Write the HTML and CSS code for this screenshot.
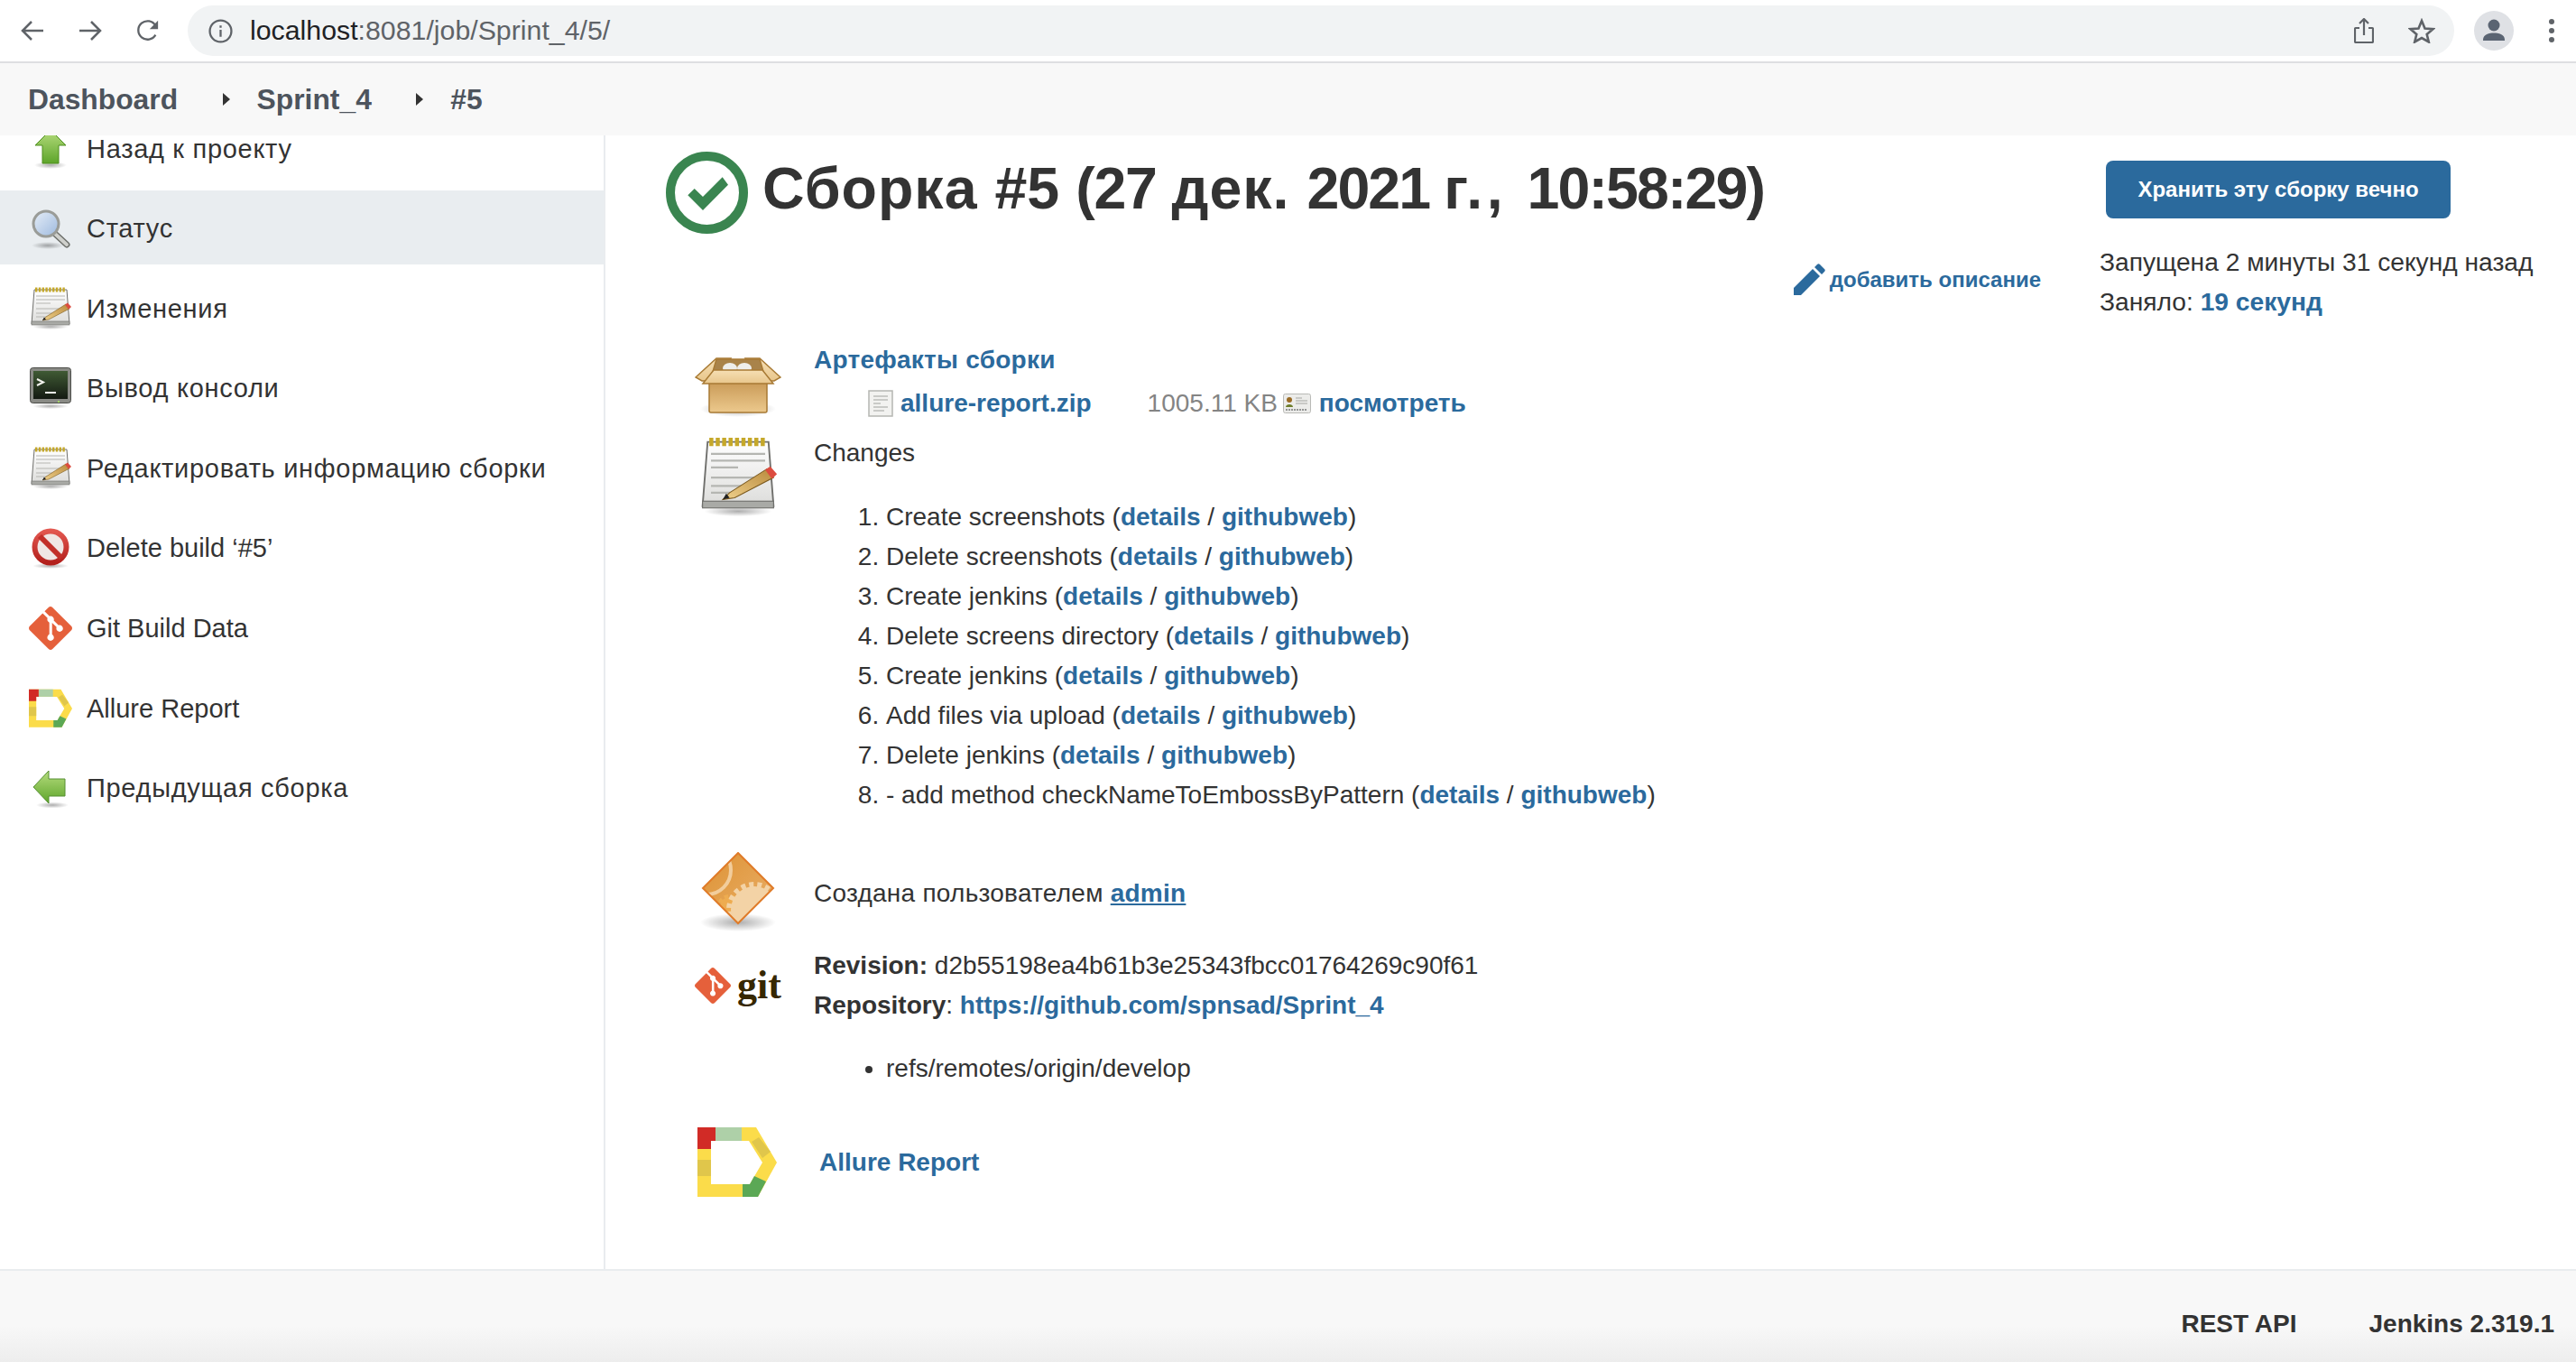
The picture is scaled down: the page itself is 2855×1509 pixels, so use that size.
FILE: index.html
```html
<!DOCTYPE html>
<html lang="en">
<head>
    <meta charset="UTF-8">
    <title>Sprint_4 #5</title>
    <link rel="stylesheet" href="styles.css">
</head>
<body>
    <!-- shared icons -->
    <svg class="sprite" xmlns="http://www.w3.org/2000/svg">
        <defs>
            <linearGradient id="g-green" x1="0" y1="0" x2="0" y2="1"><stop offset="0" stop-color="#b6dc7e"/><stop offset="1" stop-color="#5da52a"/></linearGradient>
            <linearGradient id="g-paper" x1="0" y1="0" x2="0" y2="1"><stop offset="0" stop-color="#ffffff"/><stop offset="1" stop-color="#dcdcda"/></linearGradient>
            <linearGradient id="g-glass" x1="0" y1="0" x2="1" y2="1"><stop offset="0" stop-color="#e6eef8"/><stop offset="1" stop-color="#9db9de"/></linearGradient>
            <linearGradient id="g-red" x1="0" y1="0" x2="0" y2="1"><stop offset="0" stop-color="#e2574f"/><stop offset="1" stop-color="#b3201c"/></linearGradient>
            <linearGradient id="g-box" x1="0" y1="0" x2="0" y2="1"><stop offset="0" stop-color="#c99a57"/><stop offset="1" stop-color="#ecc98d"/></linearGradient>
            <linearGradient id="g-flap" x1="0" y1="0" x2="0" y2="1"><stop offset="0" stop-color="#f6dfb4"/><stop offset="1" stop-color="#e8c68c"/></linearGradient>
            <linearGradient id="g-pencil" x1="0" y1="1" x2="1" y2="0"><stop offset="0" stop-color="#f0d28e"/><stop offset="1" stop-color="#b98a3c"/></linearGradient>
            <linearGradient id="g-term" x1="0" y1="0" x2="0" y2="1"><stop offset="0" stop-color="#3f5a34"/><stop offset="1" stop-color="#141a12"/></linearGradient>
            <linearGradient id="g-diamond" x1="0" y1="0" x2="1" y2="1"><stop offset="0" stop-color="#dd9234"/><stop offset="1" stop-color="#eab06a"/></linearGradient>
            <radialGradient id="g-shadow"><stop offset="0" stop-color="#000" stop-opacity=".32"/><stop offset="1" stop-color="#000" stop-opacity="0"/></radialGradient>
            <clipPath id="c-diamond"><path d="M41 1 80 40 41 79 2 40z"/></clipPath>
        </defs>
        <symbol id="i-up" viewBox="0 0 48 48">
            <ellipse cx="24" cy="42" rx="18" ry="4" fill="url(#g-shadow)"/>
            <path d="M24 3 41 20H33V40H15V20H7z" fill="url(#g-green)" stroke="#4e8f1f" stroke-width="1"/>
        </symbol>
        <symbol id="i-search" viewBox="0 0 48 48">
            <ellipse cx="21" cy="43" rx="18" ry="4" fill="url(#g-shadow)"/>
            <path d="M29 30 42 42" stroke="#6d6f6b" stroke-width="7" stroke-linecap="round"/>
            <path d="M29 30 42 42" stroke="#cfd0cc" stroke-width="4" stroke-linecap="round"/>
            <circle cx="19" cy="19" r="14" fill="url(#g-glass)" stroke="#9a9c98" stroke-width="3"/>
        </symbol>
        <symbol id="i-notes" viewBox="0 0 48 48">
            <ellipse cx="24" cy="44" rx="20" ry="3" fill="url(#g-shadow)"/>
            <path d="M6 3H42L45 41H3z" fill="url(#g-paper)" stroke="#6f6f6c" stroke-width="1"/>
            <rect x="3" y="38" width="42" height="4" fill="#a9aaa6" stroke="#6f6f6c" stroke-width=".6"/>
            <path d="M8 10H40M8 14H40M8 18H24M8 24H36M8 29H30M8 33H26" stroke="#b5b6b2" stroke-width="1.2"/>
            <path d="M7 3H41" stroke="#c5a82a" stroke-width="5" stroke-dasharray="2.400 1.400"/>
            <path d="M19 33 41 19 45 24 22 36 15 37z" fill="url(#g-pencil)" stroke="#7c5a1e" stroke-width=".6"/>
            <path d="M15 37 17 33.500 19 36z" fill="#222"/>
            <path d="M40 19.500 43 17.500 47 22 44 24.800z" fill="#dc4c3f"/>
        </symbol>
        <symbol id="i-term" viewBox="0 0 48 48">
            <ellipse cx="24" cy="44" rx="20" ry="3" fill="url(#g-shadow)"/>
            <rect x="1.500" y="1.500" width="45" height="39" rx="3" fill="#8a8b86" stroke="#4b4c48" stroke-width="1"/>
            <rect x="5" y="5" width="38" height="31" fill="url(#g-term)"/>
            <path d="M9 14 16 17.500 9 21" fill="none" stroke="#f3f3ee" stroke-width="2"/>
            <path d="M18 29H30" stroke="#f3f3ee" stroke-width="2"/>
            <rect x="32" y="38" width="2" height="2" fill="#a5d46a"/>
        </symbol>
        <symbol id="i-stop" viewBox="0 0 48 48">
            <ellipse cx="24" cy="44" rx="20" ry="3" fill="url(#g-shadow)"/>
            <circle cx="24" cy="23" r="17.500" fill="#f0e6e4" stroke="url(#g-red)" stroke-width="6"/>
            <path d="M12 11 36 35" stroke="#c22f29" stroke-width="6"/>
        </symbol>
        <symbol id="i-git" viewBox="0 0 24 24">
            <path fill="#e5603b" d="M23.546 10.93L13.067.452c-.604-.603-1.582-.603-2.188 0L8.708 2.627l2.76 2.76c.645-.215 1.379-.07 1.889.441.516.515.658 1.258.438 1.9l2.658 2.66c.645-.223 1.387-.078 1.9.435.721.72.721 1.884 0 2.604-.719.719-1.881.719-2.6 0-.539-.541-.674-1.337-.404-1.996L12.86 8.955v6.525c.176.086.342.203.488.348.713.721.713 1.883 0 2.6-.719.721-1.889.721-2.609 0-.719-.719-.719-1.879 0-2.598.182-.18.387-.316.605-.406V8.835c-.217-.091-.424-.222-.6-.401-.545-.545-.676-1.342-.396-2.009L7.636 3.7.45 10.881c-.6.605-.6 1.584 0 2.189l10.48 10.477c.604.604 1.582.604 2.186 0l10.43-10.43c.605-.603.605-1.582 0-2.187"/>
        </symbol>
        <symbol id="i-allure" viewBox="0 0 88 78">
            <path fill="#fbdc4a" fill-rule="evenodd" d="M0 0H65L88 39 67 77H0zM15 15V63H58L72 39 57 15z"/>
            <path fill="#d12b26" d="M0 0H20V15H15V24H0z"/>
            <path fill="#aed0a8" d="M20 0H49V15H20z"/>
            <path fill="#e0c64b" d="M0 36H15V54H0zM60 16 68 11 81 27 72 34z"/>
            <path fill="#5ba855" d="M50 63H58L63 54 76 60 67 77H50z"/>
        </symbol>
        <symbol id="i-back" viewBox="0 0 48 48">
            <ellipse cx="26" cy="43" rx="18" ry="3.500" fill="url(#g-shadow)"/>
            <path d="M5 23 22 5V14H40V33H22V41z" fill="url(#g-green)" stroke="#568f33" stroke-width="1"/>
        </symbol>
    </svg>

    <div class="browser-bar">
        <svg class="nav-icon" viewBox="0 0 26 26"><path d="M25 13H3M12 3 2 13 12 23"/></svg>
        <svg class="nav-icon" viewBox="0 0 26 26"><path d="M1 13H23M14 3 24 13 14 23"/></svg>
        <svg class="nav-icon" viewBox="0 0 28 26"><path d="M23 18A11 11 0 1 1 23 7"/><path class="solid" d="M26 1V11H16z"/></svg>
        <div class="address">
            <svg class="info-icon" viewBox="0 0 26 26"><circle cx="13" cy="13" r="11.500"/><path d="M13 11.500V19M13 7V9.500"/></svg>
            <span class="url"><span class="url-host">localhost</span>:8081/job/Sprint_4/5/</span>
            <svg class="share-icon" viewBox="0 0 22 28"><path d="M6 11H2A1 1 0 0 0 1 12V26A1 1 0 0 0 2 27H20A1 1 0 0 0 21 26V12A1 1 0 0 0 20 11H16M11 19V2M6 6 11 1 16 6"/></svg>
            <svg class="star-icon" viewBox="0 0 30 28"><path d="M15 3 18.500 11.500 27.500 12.200 20.700 18 22.800 26.500 15 22 7.200 26.500 9.300 18 2.500 12.200 11.500 11.500z"/></svg>
        </div>
        <div class="avatar"><svg viewBox="0 0 44 44"><circle cx="22" cy="16" r="6.500"/><path d="M10 32C10 26 17 24.500 22 24.500S34 26 34 32V33H10z"/></svg></div>
        <div class="dots"><i></i><i></i><i></i></div>
    </div>

    <div class="breadcrumbs">
        <a class="crumb">Dashboard</a>
        <span class="caret"></span>
        <a class="crumb">Sprint_4</a>
        <span class="caret"></span>
        <a class="crumb">#5</a>
    </div>

    <div class="page">
        <div class="sidebar">
            <div class="tasks">
                <a class="task cyr"><svg class="task-icon"><use href="#i-up"/></svg>Назад к проекту</a>
                <a class="task cyr active"><svg class="task-icon"><use href="#i-search"/></svg>Статус</a>
                <a class="task cyr"><svg class="task-icon"><use href="#i-notes"/></svg>Изменения</a>
                <a class="task cyr"><svg class="task-icon"><use href="#i-term"/></svg>Вывод консоли</a>
                <a class="task cyr"><svg class="task-icon"><use href="#i-notes"/></svg>Редактировать информацию сборки</a>
                <a class="task"><svg class="task-icon"><use href="#i-stop"/></svg>Delete build ‘#5’</a>
                <a class="task"><svg class="task-icon"><use href="#i-git"/></svg>Git Build Data</a>
                <a class="task"><svg class="task-icon"><use href="#i-allure"/></svg>Allure Report</a>
                <a class="task cyr"><svg class="task-icon"><use href="#i-back"/></svg>Предыдущая сборка</a>
            </div>
        </div>

        <div class="content">
            <div class="build-main">
                <div class="build-title">
                    <svg class="status-icon" viewBox="0 0 91 91">
                        <circle cx="45.500" cy="45.500" r="40.500" fill="none" stroke="#3a8550" stroke-width="10"/>
                        <path fill="#3a8550" d="M24.300 48.300 31.700 41 41 50 62.700 28.300 69 36.700 41 65z"/>
                    </svg>
                    <h1><span class="sp-wide">Сборка </span>#5 <span class="sp-narrow">(27 </span><span class="sp-wide">дек. </span><span class="sp-tight">2021 </span><span class="sp-wider">г., </span><span class="sp-tight">10:58:29)</span></h1>
                </div>

                <div class="add-description">
                    <svg class="pencil-icon" viewBox="0 0 36 36"><path d="M1 27V35H9L30 14 22 6zM24 4 32 12 35 9C36 8 36 7 35 6L30 1C29 0 28 0 27 1z"/></svg>
                    <a class="link small">добавить описание</a>
                </div>

                <div class="rows">
                    <div class="row row-artifacts">
                        <svg class="row-icon" viewBox="0 0 96 72">
                            <ellipse cx="48" cy="58" rx="42" ry="9" fill="url(#g-shadow)"/>
                            <path d="M1 23 24 2H40L26 27H8zM95 23 72 2H56L70 27H88z" fill="url(#g-flap)" stroke="#a87a34" stroke-width="1.500"/>
                            <path d="M24 3H72L79 27H17z" fill="#a9834a" stroke="#a87a34" stroke-width="1.500"/>
                            <ellipse cx="39" cy="13" rx="8" ry="6" fill="#eeeeec"/>
                            <ellipse cx="55" cy="13" rx="8" ry="6" fill="#eeeeec"/>
                            <path d="M16 28H80V60C80 61 79 62 78 62H18C17 62 16 61 16 60z" fill="url(#g-box)" stroke="#a87a34" stroke-width="1.500"/>
                            <path d="M21 15H75L87 30H9z" fill="url(#g-flap)" stroke="#a87a34" stroke-width="1.500"/>
                        </svg>
                        <div class="row-body">
                            <a class="link line cyr-tight">Артефакты сборки</a>
                            <div class="artifact">
                                <svg class="file-icon" viewBox="0 0 28 30">
                                    <rect x="1" y="1" width="26" height="28" fill="#f2f2f0" stroke="#b5b6b2" stroke-width="1.500"/>
                                    <path d="M6 7H22M6 11H22M6 15H14M6 19H22M6 23H18" stroke="#bcbdb9" stroke-width="1.500"/>
                                </svg>
                                <a class="link file-name">allure-report.zip</a>
                                <span class="file-size">1005.11 KB</span>
                                <svg class="view-icon" viewBox="0 0 31 22">
                                    <rect x=".500" y=".500" width="30" height="21" rx="2" fill="#ececea" stroke="#b9bab6"/>
                                    <circle cx="7" cy="7" r="3" fill="#9a6b25"/>
                                    <path d="M3 15C3 11 11 11 11 15z" fill="#6d7d2b"/>
                                    <path d="M14 5H21M14 8H27M14 11H27" stroke="#a5a6a2" stroke-width="1"/>
                                    <path d="M3 18H27" stroke="#77787a" stroke-width="1.500" stroke-dasharray="2 1"/>
                                </svg>
                                <a class="link">посмотреть</a>
                            </div>
                        </div>
                    </div>

                    <div class="row row-changes">
                        <svg class="row-icon"><use href="#i-notes"/></svg>
                        <div class="row-body">
                            <div class="line">Changes</div>
                            <ol class="changes">
                                <li>Create screenshots (<a class="link">details</a> / <a class="link">githubweb</a>)</li>
                                <li>Delete screenshots (<a class="link">details</a> / <a class="link">githubweb</a>)</li>
                                <li>Create jenkins (<a class="link">details</a> / <a class="link">githubweb</a>)</li>
                                <li>Delete screens directory (<a class="link">details</a> / <a class="link">githubweb</a>)</li>
                                <li>Create jenkins (<a class="link">details</a> / <a class="link">githubweb</a>)</li>
                                <li>Add files via upload (<a class="link">details</a> / <a class="link">githubweb</a>)</li>
                                <li>Delete jenkins (<a class="link">details</a> / <a class="link">githubweb</a>)</li>
                                <li>- add method checkNameToEmbossByPattern (<a class="link">details</a> / <a class="link">githubweb</a>)</li>
                            </ol>
                        </div>
                    </div>

                    <div class="row row-user">
                        <svg class="row-icon" viewBox="0 0 96 90">
                            <g transform="translate(7 0)">
                                <ellipse cx="41" cy="78" rx="42" ry="10" fill="url(#g-shadow)"/>
                                <path d="M41 1 80 40 41 79 2 40z" fill="url(#g-diamond)"/>
                                <g clip-path="url(#c-diamond)">
                                    <circle cx="6" cy="20" r="27" fill="none" stroke="#f2cd9c" stroke-width="4"/>
                                    <circle cx="31" cy="60" r="10" fill="#eeac50" stroke="#eeac50" stroke-width="6" stroke-dasharray="4 3"/>
                                    <circle cx="59" cy="64" r="26" fill="#f3d3a6"/>
                                    <circle cx="59" cy="64" r="28" fill="none" stroke="#f3d3a6" stroke-width="6" stroke-dasharray="5 4"/>
                                </g>
                                <path d="M41 1 80 40 41 79 2 40z" fill="none" stroke="#e07b28" stroke-width="2"/>
                            </g>
                        </svg>
                        <div class="row-body"><div class="line cyr-tight">Создана пользователем <a class="link underlined">admin</a></div></div>
                    </div>

                    <div class="row row-git">
                        <div class="git-logo">
                            <svg class="git-mark"><use href="#i-git"/></svg>
                            <span class="git-word">git</span>
                        </div>
                        <div class="row-body">
                            <div class="line"><b>Revision:</b> d2b55198ea4b61b3e25343fbcc01764269c90f61</div>
                            <div class="line"><b>Repository</b>: <a class="link">https://github.com/spnsad/Sprint_4</a></div>
                            <ul class="branches"><li>refs/remotes/origin/develop</li></ul>
                        </div>
                    </div>

                    <div class="row row-allure">
                        <svg class="allure-big"><use href="#i-allure"/></svg>
                        <a class="link allure-link">Allure Report</a>
                    </div>
                </div>
            </div>

            <div class="build-side">
                <a class="keep-button">Хранить эту сборку вечно</a>
                <div class="build-info">
                    <div>Запущена 2 минуты 31 секунд назад</div>
                    <div>Заняло: <a class="link">19 секунд</a></div>
                </div>
            </div>
        </div>
    </div>

    <div class="footer">
        <a class="footer-link">REST API</a>
        <a class="footer-link">Jenkins 2.319.1</a>
    </div>
</body>
</html>
```

FILE: styles.css
```css
html, body {
    height: 100%;
}

body {
    margin: 0;
    height: 100vh;
    display: flex;
    flex-direction: column;
    overflow: hidden;
    background-color: white;
    font-family: "Liberation Sans", Arial, sans-serif;
    font-size: 28px;
    line-height: 44px;
    color: #333;
}

.sprite {
    display: block;
    width: 0;
    height: 0;
    overflow: hidden;
}

/* browser chrome */
.browser-bar {
    flex: none;
    display: flex;
    align-items: center;
    height: 68px;
    padding-left: 23px;
    box-sizing: border-box;
    background-color: white;
}

.nav-icon {
    flex: none;
    width: 26px;
    height: 26px;
    margin-right: 38px;
    fill: none;
    stroke: #5f6368;
    stroke-width: 2.5;
}

.nav-icon .solid {
    fill: #5f6368;
    stroke: none;
}

.address {
    flex: none;
    display: flex;
    align-items: center;
    width: 2512px;
    height: 56px;
    margin-left: -7px;
    padding-left: 23px;
    box-sizing: border-box;
    border-radius: 28px;
    background-color: #f1f3f4;
}

.info-icon {
    flex: none;
    width: 27px;
    height: 27px;
    margin-right: 19px;
    fill: none;
    stroke: #5f6368;
    stroke-width: 2.2;
}

.url {
    flex: 1;
    font-size: 30.300px;
    color: #5f6368;
}

.url-host {
    color: #202124;
}

.share-icon {
    flex: none;
    width: 22px;
    height: 28px;
    margin-right: 38px;
    fill: none;
    stroke: #5f6368;
    stroke-width: 2.2;
}

.star-icon {
    flex: none;
    width: 30px;
    height: 28px;
    margin-right: 21px;
    fill: none;
    stroke: #5f6368;
    stroke-width: 2.6;
}

.avatar {
    flex: none;
    width: 44px;
    height: 44px;
    margin-left: 22px;
    border-radius: 50%;
    background-color: #dfe1e5;
}

.avatar svg {
    display: block;
    fill: #5a6472;
}

.dots {
    flex: none;
    display: flex;
    flex-direction: column;
    gap: 4px;
    margin-left: 39px;
}

.dots i {
    display: block;
    width: 6px;
    height: 6px;
    border-radius: 50%;
    background-color: #5f6368;
}

/* breadcrumb bar */
.breadcrumbs {
    flex: none;
    display: flex;
    align-items: center;
    height: 82px;
    padding-left: 31px;
    box-sizing: border-box;
    border-top: 2px solid #dedfe1;
    background-color: #f8f8f8;
    position: relative;
    z-index: 1;
}

.crumb {
    font-size: 31.800px;
    font-weight: bold;
    color: #4d545d;
}

.caret {
    width: 0;
    height: 0;
    margin: 0 30px 0 49.500px;
    border-left: 8px solid #333;
    border-top: 7.500px solid transparent;
    border-bottom: 7.500px solid transparent;
}

/* page */
.page {
    flex: 1;
    display: flex;
    min-height: 0;
}

.sidebar {
    flex: none;
    width: 671px;
    box-sizing: border-box;
    border-right: 2px solid #e9ecef;
    overflow: hidden;
}

.tasks {
    margin-top: -28px;
}

.task {
    display: flex;
    align-items: center;
    gap: 16px;
    height: 82px;
    margin-bottom: 6.600px;
    padding: 3px 0 0 32px;
    box-sizing: border-box;
    font-size: 29px;
}

.task.cyr {
    letter-spacing: .7px;
}

.task.active {
    background-color: #e9edf0;
}

.task-icon {
    flex: none;
    width: 48px;
    height: 48px;
}

.content {
    flex: 1;
    display: flex;
    min-width: 0;
}

.build-main {
    flex: 1;
    padding: 18px 0 0 67px;
    min-width: 0;
}

.build-side {
    flex: none;
    width: 528px;
    padding-top: 28px;
}

.build-title {
    display: flex;
    align-items: center;
    gap: 16px;
}

.status-icon {
    flex: none;
    width: 91px;
    height: 91px;
}

h1 {
    margin: 0;
    padding-bottom: 10px;
    font-size: 64.500px;
    line-height: 80px;
    font-weight: bold;
    color: #333;
    white-space: nowrap;
}

.sp-wide {
    letter-spacing: 1px;
}

.sp-wider {
    letter-spacing: 4.500px;
}

.sp-narrow {
    letter-spacing: -1.200px;
}

.sp-tight {
    letter-spacing: -1.900px;
}

.add-description {
    display: flex;
    align-items: center;
    justify-content: flex-end;
    gap: 5px;
    margin-top: 29px;
    padding-right: 65px;
}

.pencil-icon {
    width: 36px;
    height: 36px;
    fill: #2b6a9d;
}

.link {
    font-weight: bold;
    color: #2b6a9d;
}

.small {
    font-size: 24px;
}

.underlined {
    text-decoration: underline;
}

.line {
    display: block;
}

.cyr-tight {
    letter-spacing: .25px;
}

.rows {
    margin: 45px 0 0 32px;
}

.row {
    display: flex;
    align-items: flex-start;
    gap: 36px;
}

.row-icon {
    flex: none;
    width: 96px;
    height: 96px;
}

.row-artifacts .row-icon {
    height: 72px;
    margin-top: 18px;
}

.artifact {
    display: flex;
    align-items: center;
    height: 52px;
    padding-left: 60px;
}

.file-icon {
    width: 28px;
    height: 30px;
    margin-right: 8px;
}

.file-name {
    margin-right: 62px;
}

.file-size {
    color: #848484;
    margin-right: 6px;
}

.view-icon {
    width: 31px;
    height: 22px;
    margin-right: 9px;
}

.row-changes {
    margin-top: 7px;
}

.row-changes .row-icon {
    width: 90px;
    height: 90px;
    margin: 4px 3px 0;
}

.changes {
    margin: 27px 0 0;
    padding-left: 80px;
}

.row-user {
    margin-top: 65px;
}

.row-user .row-icon {
    height: 90px;
    margin-top: -24px;
}

.row-git {
    margin-top: 14px;
}

.git-logo {
    flex: none;
    display: flex;
    align-items: center;
    gap: 7px;
    width: 96px;
    height: 44px;
    margin-top: 22px;
}

.git-mark {
    flex: none;
    width: 40px;
    height: 40px;
}

.git-word {
    font-family: "Liberation Serif", serif;
    font-size: 44px;
    font-weight: bold;
    line-height: 44px;
    color: #362701;
}

.branches {
    margin: 26px 0 0;
    padding-left: 80px;
}

.row-allure {
    align-items: center;
    gap: 0;
    margin-top: 43px;
}

.allure-big {
    flex: none;
    width: 88px;
    height: 78px;
    margin-left: 3px;
}

.allure-link {
    margin-left: 47px;
}

.keep-button {
    display: block;
    width: 382px;
    height: 64px;
    margin-left: 7px;
    border-radius: 8px;
    background-color: #2b6a9d;
    color: white;
    font-size: 24px;
    font-weight: bold;
    line-height: 64px;
    text-align: center;
}

.build-info {
    margin-top: 26px;
    font-size: 28.200px;
}

.footer {
    flex: none;
    display: flex;
    justify-content: flex-end;
    align-items: center;
    gap: 80px;
    height: 103px;
    padding: 16px 24px 0 0;
    box-sizing: border-box;
    border-top: 2px solid #e9ecef;
    background: linear-gradient(#f8f8f8 60%, #ededed);
}

.footer-link {
    font-weight: bold;
    color: #333;
}
```
